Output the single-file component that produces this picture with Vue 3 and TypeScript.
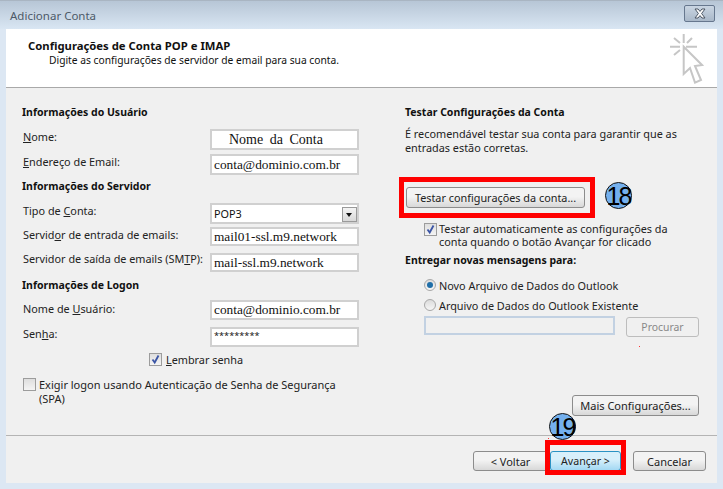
<script setup lang="ts">
interface Row { label: string; key: string; value: string; kind?: string }
const split = (s: string, k: string) => {
  const i = s.indexOf(k)
  return [s.slice(0, i), k, s.slice(i + k.length)]
}
const userRows: Row[] = [
  { label: 'Nome:', key: 'N', value: 'Nome da Conta', kind: 'name' },
  { label: 'Endereço de Email:', key: 'E', value: 'conta@dominio.com.br' },
]
const serverRows: Row[] = [
  { label: 'Tipo de Conta:', key: 'C', value: 'POP3', kind: 'select' },
  { label: 'Servidor de entrada de emails:', key: 'o', value: 'mail01-ssl.m9.network', kind: 'in' },
  { label: 'Servidor de saída de emails (SMTP):', key: 'T', value: 'mail-ssl.m9.network', kind: 'out' },
]
const logonRows: Row[] = [
  { label: 'Nome de Usuário:', key: 'U', value: 'conta@dominio.com.br', kind: 'user' },
  { label: 'Senha:', key: 'h', value: '*********', kind: 'pass' },
]
const groups = [
  { title: 'Informações do Usuário', rows: userRows, cls: '' },
  { title: 'Informações do Servidor', rows: serverRows, cls: '' },
  { title: 'Informações de Logon', rows: logonRows, cls: 'tight' },
]
</script>

<template>
  <div class="window">
    <div class="titlebar">
      <span class="title">Adicionar Conta</span>
      <div class="close">
        <svg width="16" height="11" viewBox="0 0 16 11">
          <path d="M3 1h3l2 2.4L10 1h3L9.6 5.5 13 10h-3L8 7.6 6 10H3l3.4-4.5z" fill="#fff" stroke="#4a5563" stroke-width="1" />
        </svg>
      </div>
    </div>

    <div class="dialog">
      <header class="head">
        <div>
          <h1>Configurações de Conta POP e IMAP</h1>
          <p>Digite as configurações de servidor de email para sua conta.</p>
        </div>
        <svg class="cursor" width="36" height="52" viewBox="0 0 36 52" fill="none" stroke="#c6c6c6">
          <path stroke-width="2" d="M15.7 2v9M2 14.7h10M18 14.7h11M6 6l6 5M24 6l-5 5M6 23l6-5" />
          <path stroke-width="2" fill="#fff" d="M15.7 14.7V42l6.3-6 5 14.6 6-2.6-6-14 7-1z" />
        </svg>
      </header>

      <main class="body">
        <section class="left">
          <template v-for="g in groups" :key="g.title">
            <h2 :class="g.cls">{{ g.title }}</h2>
            <div v-for="r in g.rows" :key="r.label" class="row" :class="r.kind">
              <label>{{ split(r.label, r.key)[0] }}<u>{{ r.key }}</u>{{ split(r.label, r.key)[2] }}</label>
              <div class="field">
                <span>{{ r.value }}</span>
                <i v-if="r.kind === 'select'" class="drop"></i>
              </div>
            </div>
          </template>
          <div class="remember">
            <span class="check on">
              <svg width="11" height="11" viewBox="0 0 11 11"><path d="M2.5 5.5l2.2 3L8.5 1.5" fill="none" stroke="#3b55a5" stroke-width="1.8" /></svg>
            </span>
            <span><u>L</u>embrar senha</span>
          </div>
          <div class="spa">
            <span class="check"></span>
            <span>Exigir logon usando Autenticação de Senha de Segurança<br />(SPA)</span>
          </div>
        </section>

        <section class="right">
          <h2 class="rh">Testar Configurações da Conta</h2>
          <p class="desc">É recomendável testar sua conta para garantir que as<br />entradas estão corretas.</p>
          <button class="btn test">Testar configurações da conta...</button>
          <div class="auto">
            <span class="check on">
              <svg width="11" height="11" viewBox="0 0 11 11"><path d="M2.5 5.5l2.2 3L8.5 1.5" fill="none" stroke="#3b55a5" stroke-width="1.8" /></svg>
            </span>
            <span>Testar automaticamente as configurações da<br />conta quando o botão Avançar for clicado</span>
          </div>
          <h2 class="deliver">Entregar novas mensagens para:</h2>
          <div class="radio first"><span class="dot on"></span>Novo Arquivo de Dados do Outlook</div>
          <div class="radio"><span class="dot"></span>Arquivo de Dados do Outlook Existente</div>
          <div class="browse">
            <div class="path"></div>
            <button class="btn disabled">Procurar</button>
          </div>
          <div class="more"><button class="btn">Mais Configurações...</button></div>
        </section>
      </main>

      <footer class="foot">
        <button class="btn back">&lt; Voltar</button>
        <button class="btn next">Avançar &gt;</button>
        <button class="btn cancel">Cancelar</button>
      </footer>
    </div>

    <div class="red box1"></div>
    <div class="red box2"></div>
    <div class="badge b18">18</div>
    <div class="badge b19">19</div>
    <i class="speck s1"></i>
    <i class="speck s2"></i>
  </div>
</template>

<style>
html, body { margin: 0; background: #dde8f4; }
</style>

<style scoped>
.window {
  position: relative;
  width: 723px;
  height: 489px;
  box-sizing: border-box;
  padding: 0 6px 6px;
  background: #dce7f3;
  overflow: hidden;
  font-family: "Noto Sans", sans-serif;
  font-size: 10.85px;
  color: #222;
}
.titlebar {
  height: 29px;
  margin: 0 -6px;
  padding: 0 8px 0 10px;
  display: flex;
  align-items: center;
  justify-content: space-between;
  background: linear-gradient(#b7c6d6, #d9e6f3);
  border-top: 1px solid #a9b5c2;
  box-sizing: border-box;
}
.title { font-size: 11.5px; color: #4d5a68; }
.close {
  width: 31px;
  height: 17px;
  box-sizing: border-box;
  margin-top: -3px;
  border: 1px solid #66778e;
  border-radius: 2px;
  background: linear-gradient(#c9d5e2, #a9b8c9);
  display: flex;
  align-items: center;
  justify-content: center;
}
.dialog { height: 454px; background: #f0f0f0; display: flex; flex-direction: column; }
.head {
  height: 59px;
  box-sizing: border-box;
  flex: none;
  background: #fff;
  border-bottom: 1px solid #a9a9a9;
  padding: 9px 10px 0 22px;
  display: flex;
  justify-content: space-between;
  color: #111;
}
.head h1 { margin: 0; font-size: 11.3px; font-weight: 700; line-height: 15px; }
.head p { margin: 0 0 0 21px; font-size: 10.28px; line-height: 15px; }
.cursor { margin-top: -6px; margin-right: 3px; }
.body { flex: 1; display: grid; grid-template-columns: 377px 1fr; border-bottom: 1px solid #b4b4b4; }
.left { padding: 17px 0 0 16px; }
h2 { margin: 0; font-size: 10.5px; font-weight: 700; line-height: 15px; color: #111; }
.left h2 { height: 15px; margin-bottom: 9px; }
.left h2.tight { margin-bottom: 7px; }
.row { display: grid; grid-template-columns: 188px 149px; height: 25px; }
.row label { line-height: 15px; padding-left: 1px; white-space: nowrap; }
.field {
  height: 21px;
  box-sizing: border-box;
  border: 2px solid #d0d0d0;
  background: #fff;
  padding-left: 2px;
  font: 13.33px/17px "Liberation Serif", serif;
  color: #111;
  position: relative;
  white-space: nowrap;
}
.row.name .field { padding-left: 17px; font-size: 14px; word-spacing: 3px; }
.row.select { height: 24px; }
.row.select .field { font: 10.85px/17px "Noto Sans", sans-serif; }
.row.in { height: 26px; }
.row.in .field { height: 19px; line-height: 15px; }
.row.out { height: 25px; }
.row.out .field { height: 19px; line-height: 15px; }
.row.out label { margin-top: -2px; }
.row.user { height: 27px; }
.row.user .field { height: 20px; line-height: 16px; }
.row.user label { padding-top: 1px; }
.row.pass { height: 25px; }
.row.pass label { margin-top: -1px; }
.row.pass .field { font: 9.2px/13px "Noto Sans", sans-serif; height: 20px; }
.drop {
  position: absolute;
  right: 0;
  top: 2px;
  width: 15px;
  height: 15px;
  border: 1px solid #9a9a9a;
  background: linear-gradient(#f4f4f4, #d8d8d8);
  box-sizing: border-box;
}
.drop::after {
  content: "";
  position: absolute;
  left: 3px;
  top: 5px;
  border: 3.5px solid transparent;
  border-top: 4px solid #111;
}
.check {
  width: 13px;
  height: 13px;
  box-sizing: border-box;
  border: 1px solid #9c9c9c;
  background: linear-gradient(#dedede, #f4f4f4);
  display: inline-flex;
  align-items: center;
  justify-content: center;
  flex: none;
}
.remember { display: flex; align-items: center; gap: 4px; margin-left: 127px; height: 15px; }
.spa { display: flex; gap: 3px; margin: 11px 0 0 1px; line-height: 14px; font-size: 11px; white-space: nowrap; }
.right { padding: 17px 0 0 22px; }
.rh { height: 15px; }
.desc { margin: 7px 0 0; line-height: 14px; }
.btn {
  font: 10.85px "Noto Sans", sans-serif;
  color: #222;
  height: 21px;
  box-sizing: border-box;
  padding: 0;
  border: 1px solid #8c8c8c;
  border-radius: 3px;
  background: linear-gradient(#f3f3f3 45%, #d8d8d8);
  white-space: nowrap;
}
.test { display: block; width: 179px; margin: 32px 0 0 1px; }
.auto { display: flex; gap: 2px; margin: 14px 0 0 19px; line-height: 13px; }
.auto .check { margin-top: 1px; }
.deliver { margin-top: 5px; }
.radio { display: flex; align-items: center; gap: 3px; margin-left: 19px; height: 20px; }
.radio.first { margin-top: 7px; }
.dot {
  width: 12px;
  height: 12px;
  box-sizing: border-box;
  border-radius: 50%;
  border: 1px solid #a8a8a8;
  background: linear-gradient(#dcdcdc, #f6f6f6);
  display: inline-block;
  position: relative;
}
.dot.on::after {
  content: "";
  position: absolute;
  left: 2px;
  top: 2px;
  width: 6px;
  height: 6px;
  border-radius: 50%;
  background: #1f6ea8;
}
.browse { display: flex; gap: 11px; margin: 1px 0 0 19px; align-items: flex-start; }
.path { width: 191px; height: 19px; box-sizing: border-box; border: 2px solid #c2d1e2; }
.disabled { width: 73px; height: 20px; margin-top: 1px; font-size: 10.4px; border-color: #bdbdbd; background: #f0f0f0; color: #888; }
.more { margin: 58px 0 0 167px; }
.more .btn { width: 127px; font-size: 11px; }
.foot { height: 47px; flex: none; padding: 15px 11px 0 0; box-sizing: border-box; display: flex; justify-content: flex-end; }
.foot .btn { height: 20px; font-size: 11px; }
.back { width: 75px; }
.foot .next { width: 71px; margin-left: 2px; font-size: 10.6px; border-color: #2a92c4; background: linear-gradient(#d8f0fb 40%, #a3d8f3); }
.cancel { width: 73px; margin-left: 12px; }
.red { position: absolute; box-sizing: border-box; border: 5px solid #f00; }
.box1 { left: 399px; top: 177px; width: 196px; height: 41px; }
.box2 { left: 545px; top: 440px; width: 81px; height: 35px; }
.badge {
  position: absolute;
  width: 27px;
  height: 27px;
  box-sizing: border-box;
  border-radius: 50%;
  border: 1px solid #111;
  background: #74b0ee;
  color: #000;
  font: 25px/27px "Liberation Sans", sans-serif;
  letter-spacing: -2px;
  display: flex;
  justify-content: center;
}
.b18 { left: 605px; top: 182px; }
.b19 { left: 549px; top: 413px; }
.speck { position: absolute; width: 1px; height: 1px; background: #f33; }
.s1 { left: 639px; top: 346px; }
.s2 { left: 548px; top: 438px; }
</style>
